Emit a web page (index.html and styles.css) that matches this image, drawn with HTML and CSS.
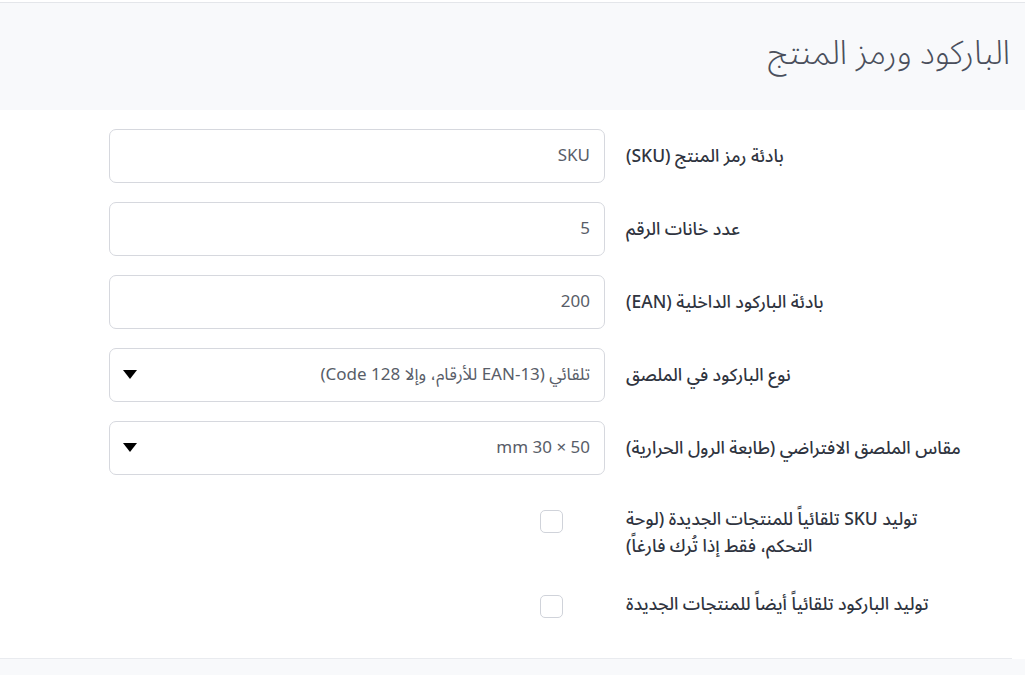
FILE: index.html
```html
<!DOCTYPE html>
<html lang="ar">
	<head>
		<meta charset="utf-8">
		<title>الباركود ورمز المنتج</title>
		<link rel="stylesheet" href="styles.css">
	</head>
	<body>
		<div class="page">
			<header class="head">
				<h2 class="title" dir="rtl">الباركود ورمز المنتج</h2>
			</header>

			<section class="card">
				<div class="row">
					<div class="field"><input class="input" type="text" dir="rtl" value="SKU"></div>
					<label class="lbl" dir="rtl">بادئة رمز المنتج (SKU)</label>
				</div>
				<div class="row">
					<div class="field"><input class="input" type="text" dir="rtl" value="5"></div>
					<label class="lbl" dir="rtl">عدد خانات الرقم</label>
				</div>
				<div class="row">
					<div class="field"><input class="input" type="text" dir="rtl" value="200"></div>
					<label class="lbl" dir="rtl">بادئة الباركود الداخلية (EAN)</label>
				</div>
				<div class="row">
					<div class="field sel">
						<select class="input" dir="rtl"><option>تلقائي (EAN-13 للأرقام، وإلا Code 128)</option></select>
						<svg class="caret" width="14" height="9" viewBox="0 0 14 9"><path d="M0 0H14L7 9Z" fill="#000"/></svg>
					</div>
					<label class="lbl" dir="rtl">نوع الباركود في الملصق</label>
				</div>
				<div class="row">
					<div class="field sel">
						<select class="input" dir="rtl"><option>50 × 30 mm</option></select>
						<svg class="caret" width="14" height="9" viewBox="0 0 14 9"><path d="M0 0H14L7 9Z" fill="#000"/></svg>
					</div>
					<label class="lbl" dir="rtl">مقاس الملصق الافتراضي (طابعة الرول الحرارية)</label>
				</div>
				<div class="row check-row">
					<div class="field check-cell"><input class="box" type="checkbox"></div>
					<label class="lbl" dir="rtl">توليد SKU تلقائياً للمنتجات الجديدة (لوحة التحكم، فقط إذا تُرك فارغاً)</label>
				</div>
				<div class="row check-row">
					<div class="field check-cell"><input class="box" type="checkbox"></div>
					<label class="lbl" dir="rtl">توليد الباركود تلقائياً أيضاً للمنتجات الجديدة</label>
				</div>
			</section>
		</div>
	</body>
</html>
```

FILE: styles.css
```css
* { padding: 0; margin: 0; box-sizing: border-box; }
body {
  background: #f8f9fb;
  color: #2f3440;
  font-family: "Noto Sans Arabic", "DejaVu Sans", "Noto Sans", sans-serif;
}
.page {
  padding-top: 2px;
  background: #fff;
}
.head {
  background: #f8f9fb;
  border-top: 1px solid #e4e6ea;
  height: 108px;
  display: flex;
  justify-content: flex-end;
  align-items: center;
  padding: 0 15px 6px 0;
}
.title {
  font-size: 33px;
  font-weight: 300;
  color: #4a4f5c;
}
.card {
  background: #fff;
  width: 1012px;
  padding: 19px 36px 40px 109px;
  border-bottom: 1px solid #e9ebef;
  display: flex;
  flex-direction: column;
  gap: 19px;
}
.row {
  display: flex;
  align-items: center;
  gap: 21px;
}
.field {
  width: 496px;
  flex: none;
}
.input {
  width: 100%;
  height: 54px;
  border: 1px solid #d6d8de;
  border-radius: 7px;
  background: #fff;
  padding: 0 14px;
  font-family: inherit;
  font-size: 17px;
  color: #585d68;
  outline: none;
}
select.input {
  appearance: none;
  -webkit-appearance: none;
}
.sel {
  position: relative;
}
.caret {
  position: absolute;
  left: 14px;
  top: 22px;
}
.lbl {
  width: 340px;
  flex: none;
  font-size: 17.5px;
  font-weight: 500;
  line-height: 27px;
  text-align: left;
}
.check-row {
  align-items: flex-start;
  margin-top: 12px;
}
.check-cell {
  display: flex;
  justify-content: flex-end;
  padding: 4px 42px 0 0;
}
.box {
  appearance: none;
  -webkit-appearance: none;
  width: 23px;
  height: 23px;
  border: 1.5px solid #d0d3da;
  border-radius: 5px;
  background: #fff;
}
```
